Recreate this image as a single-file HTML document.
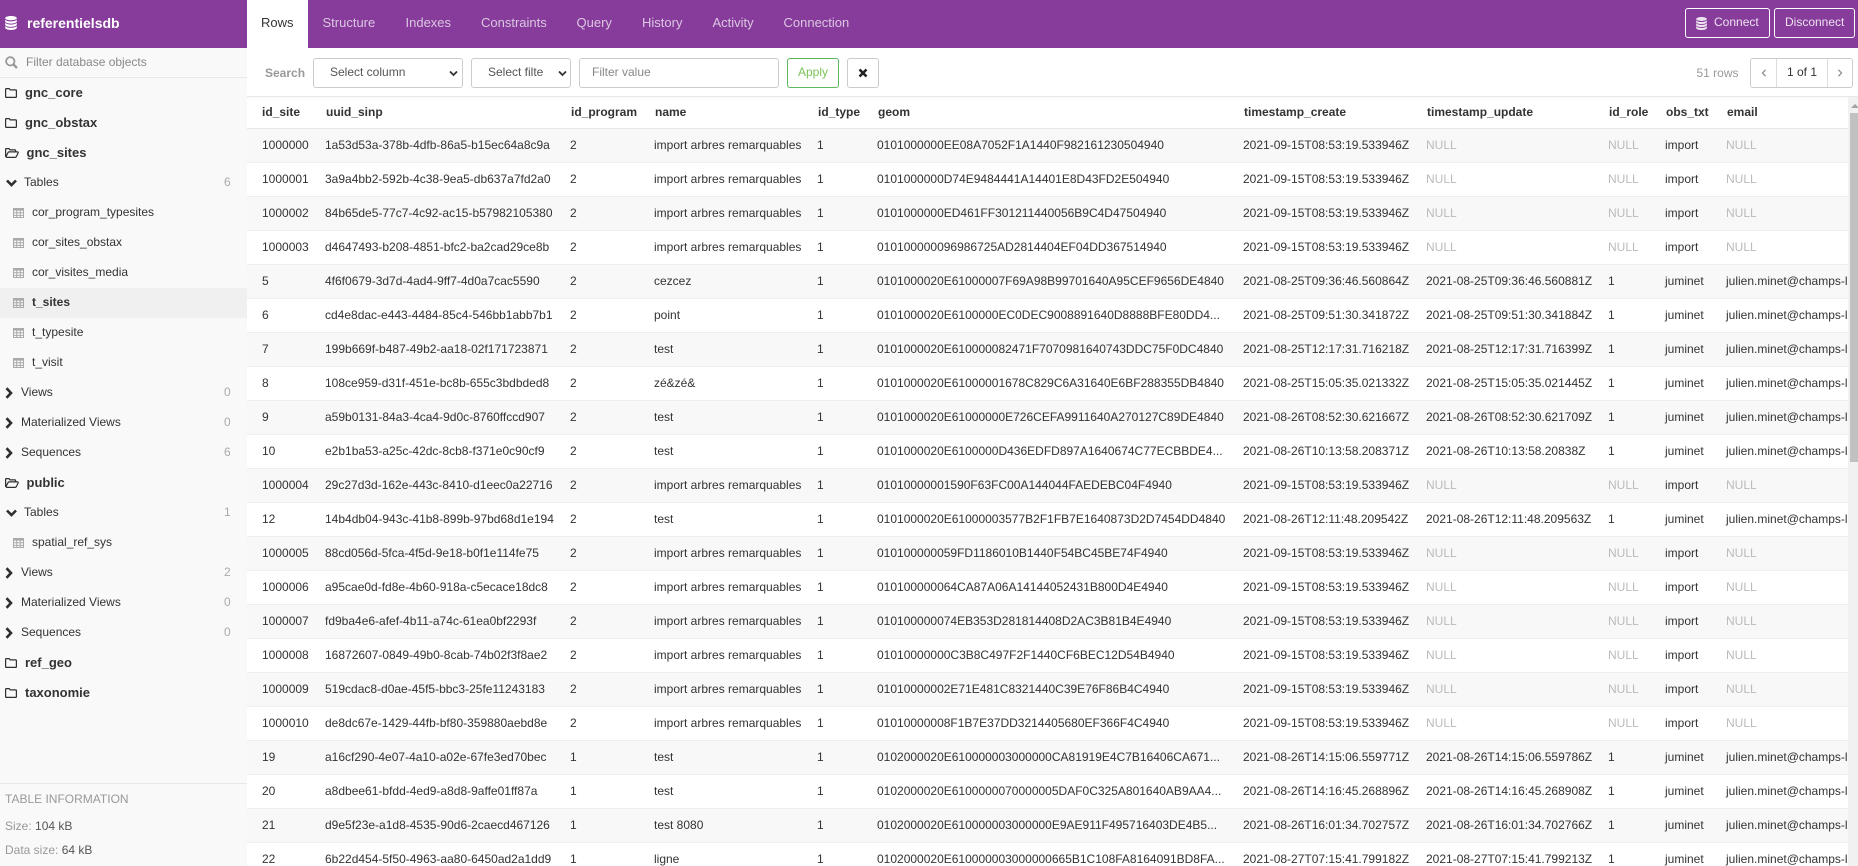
<!DOCTYPE html>
<html><head><meta charset="utf-8"><title>referentielsdb</title>
<style>
*{box-sizing:border-box}
html,body{margin:0;padding:0;width:1858px;height:866px;overflow:hidden;background:#fff;font:12px "Liberation Sans",sans-serif;color:#333}
.a{position:absolute}
#top{left:0;top:0;width:1858px;height:48px;background:#873c9b}
#brand{left:27px;top:0;line-height:47px;font-size:14px;font-weight:bold;color:#fff}
.tab{position:absolute;top:0;height:48px;line-height:46px;font-size:13px;color:rgba(255,255,255,.7)}
#rowstab{left:247px;top:0;width:61px;height:48px;background:#fff;color:#333;padding-left:14px;line-height:46px;font-size:13px}
.tb{position:absolute;top:8px;height:30px;border:1px solid #fff;border-radius:3px;color:rgba(255,255,255,.85);line-height:27px;font-size:12px}
#side{left:0;top:48px;width:247px;height:818px;background:#f9f9f9}
#flt{left:0;top:48px;width:247px;height:30px;border-bottom:1px solid #e8e8e8;line-height:29px;padding-left:26px;color:#888}
.r{position:absolute;left:0;width:247px;height:30px;line-height:29px;white-space:nowrap}
.r svg{position:absolute}
.r b{position:absolute;left:25px;font-size:13px;color:#333}
.r b.o{left:26.5px}
.r span{position:absolute}
.r em{position:absolute;left:224px;font-style:normal;color:#aaa}
.c{fill:none;stroke:#2f2f2f;stroke-width:2.6}
#info{left:0;top:783px;width:247px;height:83px;border-top:1px solid #e8e8e8;color:#999}
#info div{position:absolute;left:5px;white-space:nowrap}
#info u{text-decoration:none;color:#555}
.ctl{position:absolute;top:58px;height:30px;border:1px solid #ccc;border-radius:3px;background:#fff;color:#555;line-height:27px;white-space:nowrap;overflow:hidden}
.ctl span{position:absolute}
.ctl svg{position:absolute}
#sh{left:247px;top:96px;width:1611px;height:1px;background:#e8e8e8;box-shadow:0 1px 2px rgba(0,0,0,.06)}
#wrap{left:247px;top:97px;width:1601px;height:769px;overflow:hidden}
table{border-collapse:separate;border-spacing:0;table-layout:fixed;width:1601px}
th,td{white-space:nowrap;overflow:hidden;text-align:left;padding:0 0 0 8px;font-size:12px;color:#333}
th{height:32px;padding:0 0 1px 9px;border-bottom:1px solid #e6e6e6;font-weight:bold}
td{height:34px;padding-bottom:2px;border-bottom:1px solid #eee}
th:first-child,td:first-child{padding-left:15px}
tr:nth-child(odd) td{background:#f8f8f8}
td i{font-style:normal;color:#bbb}
#track{left:1848px;top:97px;width:10px;height:769px;background:#f1f1f1}
#thumb{left:1850px;top:113px;width:8px;height:349px;background:#c1c1c1}
#arr{left:1851px;top:104px;width:0;height:0;border-left:4px solid transparent;border-right:4px solid transparent;border-bottom:4px solid #a3a3a3}
</style></head><body>
<svg width="0" height="0" style="position:absolute">
<symbol id="db" viewBox="0 0 12 14.5"><ellipse cx="6" cy="2.2" rx="6" ry="2.2"/><path d="M0 3.6C1 5 3.4 5.6 6 5.6S11 5 12 3.6V5.6C12 6.8 9.5 7.9 6 7.9S0 6.8 0 5.6Z"/><path d="M0 6.9C1 8.3 3.4 8.9 6 8.9S11 8.3 12 6.9V8.9C12 10.1 9.5 11.2 6 11.2S0 10.1 0 8.9Z"/><path d="M0 10.2C1 11.6 3.4 12.2 6 12.2S11 11.6 12 10.2V12.2C12 13.4 9.5 14.5 6 14.5S0 13.4 0 12.2Z"/></symbol>
<symbol id="fo" viewBox="0 0 12 10"><path d="M1.4.6H4.2L5.2 1.9H10.6C11.1 1.9 11.4 2.2 11.4 2.7V8.6C11.4 9.1 11.1 9.4 10.6 9.4H1.4C.9 9.4.6 9.1.6 8.6V1.4C.6.9.9.6 1.4.6Z" fill="none" stroke="#2f2f2f" stroke-width="1.2"/></symbol>
<symbol id="fop" viewBox="0 0 14 10"><path d="M.6 8.8V1.4C.6.9.9.6 1.4.6H4L5 1.9H9.8C10.3 1.9 10.6 2.2 10.6 2.7V3.9M.7 9.2 3 4.6C3.2 4.1 3.6 3.9 4.1 3.9H12.4C13.1 3.9 13.4 4.4 13.1 5L11.3 8.7C11 9.2 10.7 9.4 10.2 9.4H1.2" fill="none" stroke="#2f2f2f" stroke-width="1.2"/></symbol>
<symbol id="tb" viewBox="0 0 11 10"><path fill="#aaa" d="M0 0H11V10H0ZM1 2.6V4.3H3.2V2.6ZM4.2 2.6V4.3H6.8V2.6ZM7.8 2.6V4.3H10V2.6ZM1 5.3V6.9H3.2V5.3ZM4.2 5.3V6.9H6.8V5.3ZM7.8 5.3V6.9H10V5.3ZM1 7.9V9H3.2V7.9ZM4.2 7.9V9H6.8V7.9ZM7.8 7.9V9H10V7.9Z" fill-rule="evenodd"/></symbol>
</svg>

<div class="a" id="top"></div>
<svg class="a" style="left:5px;top:16px;fill:#fff" width="12" height="14"><use href="#db"/></svg>
<div class="a" id="brand">referentielsdb</div>
<div class="a" id="rowstab">Rows</div>
<div class="tab" style="left:322.5px">Structure</div>
<div class="tab" style="left:405.5px">Indexes</div>
<div class="tab" style="left:481px">Constraints</div>
<div class="tab" style="left:576.5px">Query</div>
<div class="tab" style="left:642px">History</div>
<div class="tab" style="left:712.5px">Activity</div>
<div class="tab" style="left:783.5px">Connection</div>
<div class="tb" style="left:1685px;width:85px;padding-left:28px">Connect<svg class="a" style="left:10px;top:8px;fill:rgba(255,255,255,.85)" width="11" height="13"><use href="#db"/></svg></div>
<div class="tb" style="left:1774px;width:81px;padding-left:10px">Disconnect</div>

<div class="a" id="side"></div>
<div class="a" id="flt">Filter database objects<svg class="a" style="left:5px;top:8px" width="13" height="13" viewBox="0 0 13 13"><circle cx="5.3" cy="5.3" r="4.2" fill="none" stroke="#999" stroke-width="1.8"/><path d="M8.4 8.4 12 12" stroke="#999" stroke-width="2.4" fill="none"/></svg></div>

<div class="r" style="top:78px"><svg style="left:5px;top:10px" width="12" height="10"><use href="#fo"/></svg><b>gnc_core</b></div>
<div class="r" style="top:108px"><svg style="left:5px;top:10px" width="12" height="10"><use href="#fo"/></svg><b>gnc_obstax</b></div>
<div class="r" style="top:138px"><svg style="left:5px;top:10px" width="14" height="10"><use href="#fop"/></svg><b class="o">gnc_sites</b></div>
<div class="r" style="top:168px"><svg style="left:6px;top:11px" width="11" height="8" viewBox="0 0 11 8"><path class="c" d="M1 1.5 5.5 6 10 1.5"/></svg><span style="left:24px">Tables</span><em>6</em></div>
<div class="r" style="top:198px"><svg style="left:13px;top:10px" width="11" height="10"><use href="#tb"/></svg><span style="left:32px">cor_program_typesites</span></div>
<div class="r" style="top:228px"><svg style="left:13px;top:10px" width="11" height="10"><use href="#tb"/></svg><span style="left:32px">cor_sites_obstax</span></div>
<div class="r" style="top:258px"><svg style="left:13px;top:10px" width="11" height="10"><use href="#tb"/></svg><span style="left:32px">cor_visites_media</span></div>
<div class="r" style="top:288px;background:#f0f0f0"><svg style="left:13px;top:10px" width="11" height="10"><use href="#tb"/></svg><span style="left:32px;font-weight:bold">t_sites</span></div>
<div class="r" style="top:318px"><svg style="left:13px;top:10px" width="11" height="10"><use href="#tb"/></svg><span style="left:32px">t_typesite</span></div>
<div class="r" style="top:348px"><svg style="left:13px;top:10px" width="11" height="10"><use href="#tb"/></svg><span style="left:32px">t_visit</span></div>
<div class="r" style="top:378px"><svg style="left:5px;top:9px" width="8" height="12" viewBox="0 0 8 12"><path class="c" d="M1.5 1.2 6 6 1.5 10.8"/></svg><span style="left:21px">Views</span><em>0</em></div>
<div class="r" style="top:408px"><svg style="left:5px;top:9px" width="8" height="12" viewBox="0 0 8 12"><path class="c" d="M1.5 1.2 6 6 1.5 10.8"/></svg><span style="left:21px">Materialized Views</span><em>0</em></div>
<div class="r" style="top:438px"><svg style="left:5px;top:9px" width="8" height="12" viewBox="0 0 8 12"><path class="c" d="M1.5 1.2 6 6 1.5 10.8"/></svg><span style="left:21px">Sequences</span><em>6</em></div>
<div class="r" style="top:468px"><svg style="left:5px;top:10px" width="14" height="10"><use href="#fop"/></svg><b class="o">public</b></div>
<div class="r" style="top:498px"><svg style="left:6px;top:11px" width="11" height="8" viewBox="0 0 11 8"><path class="c" d="M1 1.5 5.5 6 10 1.5"/></svg><span style="left:24px">Tables</span><em>1</em></div>
<div class="r" style="top:528px"><svg style="left:13px;top:10px" width="11" height="10"><use href="#tb"/></svg><span style="left:32px">spatial_ref_sys</span></div>
<div class="r" style="top:558px"><svg style="left:5px;top:9px" width="8" height="12" viewBox="0 0 8 12"><path class="c" d="M1.5 1.2 6 6 1.5 10.8"/></svg><span style="left:21px">Views</span><em>2</em></div>
<div class="r" style="top:588px"><svg style="left:5px;top:9px" width="8" height="12" viewBox="0 0 8 12"><path class="c" d="M1.5 1.2 6 6 1.5 10.8"/></svg><span style="left:21px">Materialized Views</span><em>0</em></div>
<div class="r" style="top:618px"><svg style="left:5px;top:9px" width="8" height="12" viewBox="0 0 8 12"><path class="c" d="M1.5 1.2 6 6 1.5 10.8"/></svg><span style="left:21px">Sequences</span><em>0</em></div>
<div class="r" style="top:648px"><svg style="left:5px;top:10px" width="12" height="10"><use href="#fo"/></svg><b>ref_geo</b></div>
<div class="r" style="top:678px"><svg style="left:5px;top:10px" width="12" height="10"><use href="#fo"/></svg><b>taxonomie</b></div>

<div class="a" id="info">
<div style="top:8px">TABLE INFORMATION</div>
<div style="top:35px">Size: <u>104 kB</u></div>
<div style="top:59px">Data size: <u>64 kB</u></div>
</div>

<div class="a" style="left:265px;top:66px;font-weight:bold;color:#999;line-height:15px">Search</div>
<div class="ctl" style="left:313px;width:150px"><span style="left:16px">Select column</span><svg style="left:135px;top:11px" width="9" height="7" viewBox="0 0 9 7"><path d="M1 1.5 4.5 5 8 1.5" fill="none" stroke="#333" stroke-width="1.8"/></svg></div>
<div class="ctl" style="left:471px;width:100px"><span style="left:16px;width:55px;overflow:hidden">Select filter</span><svg style="left:86px;top:11px" width="9" height="7" viewBox="0 0 9 7"><path d="M1 1.5 4.5 5 8 1.5" fill="none" stroke="#333" stroke-width="1.8"/></svg></div>
<div class="ctl" style="left:579px;width:200px;color:#888"><span style="left:12px">Filter value</span></div>
<div class="ctl" style="left:787px;width:52px;border-color:#5cb85c;color:#7ac35a;text-align:center">Apply</div>
<div class="ctl" style="left:847px;width:32px"><svg style="left:10px;top:9px" width="10" height="10" viewBox="0 0 10 10"><path d="M1.5 1.5 8.5 8.5M8.5 1.5 1.5 8.5" stroke="#222" stroke-width="2.6" fill="none"/></svg></div>
<div class="a" style="left:1696.5px;top:66px;color:#999;line-height:15px">51 rows</div>
<div class="ctl" style="left:1750px;width:103px;color:#333"><span style="left:25px;width:1px;height:28px;background:#ddd"></span><span style="left:76px;width:1px;height:28px;background:#ddd"></span><span style="left:36px">1 of 1</span><svg style="left:10px;top:10px" width="6" height="8" viewBox="0 0 6 8"><path d="M4.5 .8 1.5 4 4.5 7.2" fill="none" stroke="#888" stroke-width="1.2"/></svg><svg style="left:86px;top:10px" width="6" height="8" viewBox="0 0 6 8"><path d="M1.5 .8 4.5 4 1.5 7.2" fill="none" stroke="#888" stroke-width="1.2"/></svg></div>

<div class="a" id="sh"></div>
<div class="a" id="wrap"><table>
<colgroup><col style="width:70px"><col style="width:245px"><col style="width:84px"><col style="width:163px"><col style="width:60px"><col style="width:366px"><col style="width:183px"><col style="width:182px"><col style="width:57px"><col style="width:61px"><col style="width:130px"></colgroup>
<thead><tr><th>id_site</th><th>uuid_sinp</th><th>id_program</th><th>name</th><th>id_type</th><th>geom</th><th>timestamp_create</th><th>timestamp_update</th><th>id_role</th><th>obs_txt</th><th>email</th></tr></thead>
<tbody>
<tr><td>1000000</td><td>1a53d53a-378b-4dfb-86a5-b15ec64a8c9a</td><td>2</td><td>import arbres remarquables</td><td>1</td><td>0101000000EE08A7052F1A1440F982161230504940</td><td>2021-09-15T08:53:19.533946Z</td><td><i>NULL</i></td><td><i>NULL</i></td><td>import</td><td><i>NULL</i></td></tr>
<tr><td>1000001</td><td>3a9a4bb2-592b-4c38-9ea5-db637a7fd2a0</td><td>2</td><td>import arbres remarquables</td><td>1</td><td>0101000000D74E9484441A14401E8D43FD2E504940</td><td>2021-09-15T08:53:19.533946Z</td><td><i>NULL</i></td><td><i>NULL</i></td><td>import</td><td><i>NULL</i></td></tr>
<tr><td>1000002</td><td>84b65de5-77c7-4c92-ac15-b57982105380</td><td>2</td><td>import arbres remarquables</td><td>1</td><td>0101000000ED461FF301211440056B9C4D47504940</td><td>2021-09-15T08:53:19.533946Z</td><td><i>NULL</i></td><td><i>NULL</i></td><td>import</td><td><i>NULL</i></td></tr>
<tr><td>1000003</td><td>d4647493-b208-4851-bfc2-ba2cad29ce8b</td><td>2</td><td>import arbres remarquables</td><td>1</td><td>010100000096986725AD2814404EF04DD367514940</td><td>2021-09-15T08:53:19.533946Z</td><td><i>NULL</i></td><td><i>NULL</i></td><td>import</td><td><i>NULL</i></td></tr>
<tr><td>5</td><td>4f6f0679-3d7d-4ad4-9ff7-4d0a7cac5590</td><td>2</td><td>cezcez</td><td>1</td><td>0101000020E61000007F69A98B99701640A95CEF9656DE4840</td><td>2021-08-25T09:36:46.560864Z</td><td>2021-08-25T09:36:46.560881Z</td><td>1</td><td>juminet</td><td>julien.minet@champs-libres.coop</td></tr>
<tr><td>6</td><td>cd4e8dac-e443-4484-85c4-546bb1abb7b1</td><td>2</td><td>point</td><td>1</td><td>0101000020E6100000EC0DEC9008891640D8888BFE80DD4...</td><td>2021-08-25T09:51:30.341872Z</td><td>2021-08-25T09:51:30.341884Z</td><td>1</td><td>juminet</td><td>julien.minet@champs-libres.coop</td></tr>
<tr><td>7</td><td>199b669f-b487-49b2-aa18-02f171723871</td><td>2</td><td>test</td><td>1</td><td>0101000020E610000082471F7070981640743DDC75F0DC4840</td><td>2021-08-25T12:17:31.716218Z</td><td>2021-08-25T12:17:31.716399Z</td><td>1</td><td>juminet</td><td>julien.minet@champs-libres.coop</td></tr>
<tr><td>8</td><td>108ce959-d31f-451e-bc8b-655c3bdbded8</td><td>2</td><td>zé&amp;zé&amp;</td><td>1</td><td>0101000020E61000001678C829C6A31640E6BF288355DB4840</td><td>2021-08-25T15:05:35.021332Z</td><td>2021-08-25T15:05:35.021445Z</td><td>1</td><td>juminet</td><td>julien.minet@champs-libres.coop</td></tr>
<tr><td>9</td><td>a59b0131-84a3-4ca4-9d0c-8760ffccd907</td><td>2</td><td>test</td><td>1</td><td>0101000020E61000000E726CEFA9911640A270127C89DE4840</td><td>2021-08-26T08:52:30.621667Z</td><td>2021-08-26T08:52:30.621709Z</td><td>1</td><td>juminet</td><td>julien.minet@champs-libres.coop</td></tr>
<tr><td>10</td><td>e2b1ba53-a25c-42dc-8cb8-f371e0c90cf9</td><td>2</td><td>test</td><td>1</td><td>0101000020E6100000D436EDFD897A1640674C77ECBBDE4...</td><td>2021-08-26T10:13:58.208371Z</td><td>2021-08-26T10:13:58.20838Z</td><td>1</td><td>juminet</td><td>julien.minet@champs-libres.coop</td></tr>
<tr><td>1000004</td><td>29c27d3d-162e-443c-8410-d1eec0a22716</td><td>2</td><td>import arbres remarquables</td><td>1</td><td>01010000001590F63FC00A144044FAEDEBC04F4940</td><td>2021-09-15T08:53:19.533946Z</td><td><i>NULL</i></td><td><i>NULL</i></td><td>import</td><td><i>NULL</i></td></tr>
<tr><td>12</td><td>14b4db04-943c-41b8-899b-97bd68d1e194</td><td>2</td><td>test</td><td>1</td><td>0101000020E61000003577B2F1FB7E1640873D2D7454DD4840</td><td>2021-08-26T12:11:48.209542Z</td><td>2021-08-26T12:11:48.209563Z</td><td>1</td><td>juminet</td><td>julien.minet@champs-libres.coop</td></tr>
<tr><td>1000005</td><td>88cd056d-5fca-4f5d-9e18-b0f1e114fe75</td><td>2</td><td>import arbres remarquables</td><td>1</td><td>010100000059FD1186010B1440F54BC45BE74F4940</td><td>2021-09-15T08:53:19.533946Z</td><td><i>NULL</i></td><td><i>NULL</i></td><td>import</td><td><i>NULL</i></td></tr>
<tr><td>1000006</td><td>a95cae0d-fd8e-4b60-918a-c5ecace18dc8</td><td>2</td><td>import arbres remarquables</td><td>1</td><td>010100000064CA87A06A14144052431B800D4E4940</td><td>2021-09-15T08:53:19.533946Z</td><td><i>NULL</i></td><td><i>NULL</i></td><td>import</td><td><i>NULL</i></td></tr>
<tr><td>1000007</td><td>fd9ba4e6-afef-4b11-a74c-61ea0bf2293f</td><td>2</td><td>import arbres remarquables</td><td>1</td><td>010100000074EB353D281814408D2AC3B81B4E4940</td><td>2021-09-15T08:53:19.533946Z</td><td><i>NULL</i></td><td><i>NULL</i></td><td>import</td><td><i>NULL</i></td></tr>
<tr><td>1000008</td><td>16872607-0849-49b0-8cab-74b02f3f8ae2</td><td>2</td><td>import arbres remarquables</td><td>1</td><td>01010000000C3B8C497F2F1440CF6BEC12D54B4940</td><td>2021-09-15T08:53:19.533946Z</td><td><i>NULL</i></td><td><i>NULL</i></td><td>import</td><td><i>NULL</i></td></tr>
<tr><td>1000009</td><td>519cdac8-d0ae-45f5-bbc3-25fe11243183</td><td>2</td><td>import arbres remarquables</td><td>1</td><td>01010000002E71E481C8321440C39E76F86B4C4940</td><td>2021-09-15T08:53:19.533946Z</td><td><i>NULL</i></td><td><i>NULL</i></td><td>import</td><td><i>NULL</i></td></tr>
<tr><td>1000010</td><td>de8dc67e-1429-44fb-bf80-359880aebd8e</td><td>2</td><td>import arbres remarquables</td><td>1</td><td>01010000008F1B7E37DD3214405680EF366F4C4940</td><td>2021-09-15T08:53:19.533946Z</td><td><i>NULL</i></td><td><i>NULL</i></td><td>import</td><td><i>NULL</i></td></tr>
<tr><td>19</td><td>a16cf290-4e07-4a10-a02e-67fe3ed70bec</td><td>1</td><td>test</td><td>1</td><td>0102000020E610000003000000CA81919E4C7B16406CA671...</td><td>2021-08-26T14:15:06.559771Z</td><td>2021-08-26T14:15:06.559786Z</td><td>1</td><td>juminet</td><td>julien.minet@champs-libres.coop</td></tr>
<tr><td>20</td><td>a8dbee61-bfdd-4ed9-a8d8-9affe01ff87a</td><td>1</td><td>test</td><td>1</td><td>0102000020E6100000070000005DAF0C325A801640AB9AA4...</td><td>2021-08-26T14:16:45.268896Z</td><td>2021-08-26T14:16:45.268908Z</td><td>1</td><td>juminet</td><td>julien.minet@champs-libres.coop</td></tr>
<tr><td>21</td><td>d9e5f23e-a1d8-4535-90d6-2caecd467126</td><td>1</td><td>test 8080</td><td>1</td><td>0102000020E610000003000000E9AE911F495716403DE4B5...</td><td>2021-08-26T16:01:34.702757Z</td><td>2021-08-26T16:01:34.702766Z</td><td>1</td><td>juminet</td><td>julien.minet@champs-libres.coop</td></tr>
<tr><td>22</td><td>6b22d454-5f50-4963-aa80-6450ad2a1dd9</td><td>1</td><td>ligne</td><td>1</td><td>0102000020E610000003000000665B1C108FA8164091BD8FA...</td><td>2021-08-27T07:15:41.799182Z</td><td>2021-08-27T07:15:41.799213Z</td><td>1</td><td>juminet</td><td>julien.minet@champs-libres.coop</td></tr>
</tbody></table></div>
<div class="a" id="track"></div>
<div class="a" id="thumb"></div>
<div class="a" id="arr"></div>
</body></html>
